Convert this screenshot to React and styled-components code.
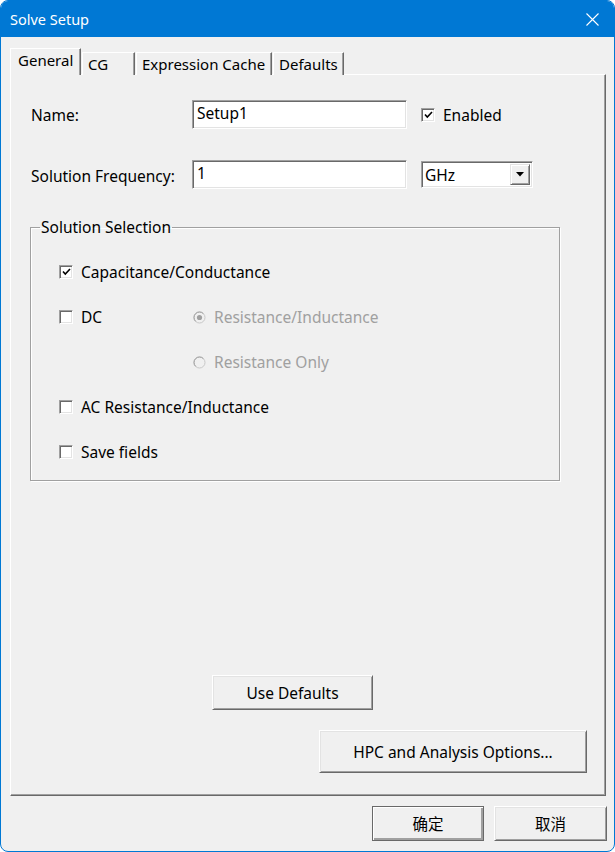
import React from 'react';
import styled, { createGlobalStyle } from 'styled-components';

const Global = createGlobalStyle`
  html, body { margin: 0; padding: 0; background: #ffffff; }
  * { box-sizing: border-box; }
`;

const FONT = `"Noto Sans", "Noto Sans CJK SC", sans-serif`;

const Window = styled.div`
  width: 615px;
  height: 852px;
  border: 1px solid #0078d4;
  border-radius: 8px;
  overflow: hidden;
  background: #f0f0f0;
  display: flex;
  flex-direction: column;
  font-family: ${FONT};
  font-size: 15.5px;
  color: #000;
`;

const TitleBar = styled.div`
  height: 36px;
  flex: none;
  background: #0078d4;
  color: #fff;
  display: flex;
  align-items: center;
  justify-content: space-between;
  padding-left: 9px;
`;

const Title = styled.span`
  font-size: 14.5px;
`;

const CloseBtn = styled.div`
  width: 44px;
  height: 36px;
  display: flex;
  align-items: center;
  justify-content: center;
`;

const Body = styled.div`
  flex: 1;
  display: flex;
  flex-direction: column;
  padding: 11px 7px 0 9px;
  min-height: 0;
`;

const TabStrip = styled.div`
  display: flex;
  align-items: flex-end;
  height: 27px;
  gap: 1px;
  position: relative;
  z-index: 1;
  margin-bottom: -1px;
`;

const Tab = styled.div`
  width: ${p => p.$w}px;
  height: ${p => (p.$active ? 27 : 23)}px;
  padding-left: ${p => (p.$active ? 7 : 5)}px;
  display: flex;
  align-items: ${p => (p.$active ? 'flex-start' : 'center')};
  padding-top: ${p => (p.$active ? 1 : 0)}px;
  font-size: 15px;
  background: #f0f0f0;
  border-top: 1px solid #ffffff;
  border-left: 1px solid #ffffff;
  border-right: 1px solid #696969;
  box-shadow: inset -1px 0 0 #a0a0a0;
  white-space: nowrap;
`;

const Panel = styled.div`
  flex: 1;
  display: flex;
  flex-direction: column;
  margin-right: 1px;
  border-top: 1px solid #ffffff;
  border-left: 1px solid #ffffff;
  border-right: 1px solid #696969;
  border-bottom: 1px solid #696969;
  box-shadow: inset -1px -1px 0 #a0a0a0;
  padding: 25px 18px 22px 19px;
`;

const FormGrid = styled.div`
  display: grid;
  grid-template-columns: 147px 215px auto;
  grid-auto-rows: 29px;
  column-gap: 14px;
  row-gap: 31px;
  align-items: center;
  padding-left: 1px;
`;

const Label = styled.span`
  white-space: nowrap;
  padding-top: ${p => p.$pt || 0}px;
`;

const TextInput = styled.input`
  width: 215px;
  height: 29px;
  font: inherit;
  color: #000;
  background: #fff;
  padding: 0 4px 3px;
  border-top: 1px solid #a0a0a0;
  border-left: 1px solid #a0a0a0;
  border-right: 1px solid #ffffff;
  border-bottom: 1px solid #ffffff;
  box-shadow: inset 1px 1px 0 #696969, inset -1px -1px 0 #e3e3e3;
  outline: none;
`;

const Combo = styled.div`
  width: 112px;
  height: 27px;
  display: flex;
  align-items: center;
  justify-content: space-between;
  background: #fff;
  padding: 2px 2px 2px 3px;
  border-top: 1px solid #a0a0a0;
  border-left: 1px solid #a0a0a0;
  border-right: 1px solid #ffffff;
  border-bottom: 1px solid #ffffff;
  box-shadow: inset 1px 1px 0 #696969, inset -1px -1px 0 #e3e3e3;
`;

const DropBtn = styled.div`
  width: 20px;
  height: 21px;
  background: #f0f0f0;
  display: flex;
  align-items: center;
  justify-content: center;
  border-top: 1px solid #e3e3e3;
  border-left: 1px solid #e3e3e3;
  border-right: 1px solid #696969;
  border-bottom: 1px solid #696969;
  box-shadow: inset 1px 1px 0 #fff, inset -1px -1px 0 #a0a0a0;
`;

const CheckItem = styled.label`
  display: flex;
  align-items: center;
  gap: ${p => p.$gap || 8}px;
  color: ${p => (p.$disabled ? '#a0a0a0' : '#000')};
  white-space: nowrap;
  grid-column: ${p => p.$col || 'auto'};
`;

const Box = styled.span`
  width: 14px;
  height: 14px;
  flex: none;
  background: #fff;
  display: flex;
  align-items: center;
  justify-content: center;
  border-top: 1px solid #a0a0a0;
  border-left: 1px solid #a0a0a0;
  border-right: 1px solid #ffffff;
  border-bottom: 1px solid #ffffff;
  box-shadow: inset 1px 1px 0 #696969, inset -1px -1px 0 #e3e3e3;
`;

const Group = styled.fieldset`
  margin: 28px 0 0 0;
  width: 530px;
  padding: 0;
  border: 1px solid #a0a0a0;
  box-shadow: 1px 1px 0 #fff, inset 1px 1px 0 #fff;
`;

const Legend = styled.legend`
  margin-left: 9px;
  padding: 0 1px;
  line-height: 20px;
`;

const GroupGrid = styled.div`
  display: grid;
  grid-template-columns: 134px auto;
  grid-auto-rows: 20px;
  row-gap: 25px;
  align-items: center;
  padding: 25px 0 18px 28px;
`;

const Spacer = styled.div`
  flex: 1;
`;

const ButtonRow = styled.div`
  display: flex;
  justify-content: ${p => p.$justify};
  padding-left: ${p => p.$indent || 0}px;
  margin-top: ${p => p.$mt || 0}px;
`;

const Button = styled.div`
  width: ${p => p.$w}px;
  height: ${p => p.$h}px;
  display: flex;
  align-items: center;
  justify-content: center;
  background: #f0f0f0;
  white-space: nowrap;
  border-top: 1px solid ${p => (p.$default ? '#696969' : '#ffffff')};
  border-left: 1px solid ${p => (p.$default ? '#696969' : '#ffffff')};
  border-right: 1px solid #696969;
  border-bottom: 1px solid #696969;
  box-shadow: ${p =>
    p.$default
      ? 'inset 1px 1px 0 #fff, inset -2px -2px 0 #a0a0a0'
      : 'inset 1px 1px 0 #e3e3e3, inset -1px -1px 0 #a0a0a0'};
`;

const Footer = styled.div`
  flex: none;
  display: flex;
  justify-content: flex-end;
  gap: 10px;
  padding: 10px 0 10px 0;
`;

const CheckMark = () => (
  <svg width="9" height="8" viewBox="0 0 9 8">
    <path d="M1 3.5 L3.3 6 L8 1" fill="none" stroke="#000" strokeWidth="1.6" />
  </svg>
);

const Radio = ({ checked }) => (
  <svg width="13" height="13" viewBox="0 0 13 13" style={{ flex: 'none' }}>
    <circle cx="6.5" cy="6.5" r="5.5" fill="#f0f0f0" stroke="#c8c8c8" strokeWidth="1" />
    <path d="M2.6 10.4 A5.5 5.5 0 0 1 10.4 2.6" fill="none" stroke="#a0a0a0" strokeWidth="1" />
    {checked && <circle cx="6.5" cy="6.5" r="2.6" fill="#a0a0a0" />}
  </svg>
);

const Check = ({ checked, children, col }) => (
  <CheckItem $col={col} $gap={8}>
    <Box>{checked && <CheckMark />}</Box>
    <span>{children}</span>
  </CheckItem>
);

export default function App() {
  return (
    <>
      <Global />
      <Window>
        <TitleBar>
          <Title>Solve Setup</Title>
          <CloseBtn>
            <svg width="13" height="13" viewBox="0 0 13 13">
              <path d="M0.5 0.5 L12.5 12.5 M12.5 0.5 L0.5 12.5" stroke="#fff" strokeWidth="1.1" />
            </svg>
          </CloseBtn>
        </TitleBar>
        <Body>
          <TabStrip>
            <Tab $active $w={71}>General</Tab>
            <Tab $w={53}>CG</Tab>
            <Tab $w={136}>Expression Cache</Tab>
            <Tab $w={71}>Defaults</Tab>
          </TabStrip>
          <Panel>
            <FormGrid>
              <Label>Name:</Label>
              <TextInput readOnly defaultValue="Setup1" />
              <Check checked>Enabled</Check>
              <Label $pt={3}>Solution Frequency:</Label>
              <TextInput readOnly defaultValue="1" />
              <Combo>
                <span>GHz</span>
                <DropBtn>
                  <svg width="8" height="5" viewBox="0 0 8 5">
                    <path d="M0 0 H8 L4 4.5 Z" fill="#000" />
                  </svg>
                </DropBtn>
              </Combo>
            </FormGrid>
            <Group>
              <Legend>Solution Selection</Legend>
              <GroupGrid>
                <Check checked col="1 / span 2">Capacitance/Conductance</Check>
                <Check>DC</Check>
                <CheckItem $disabled>
                  <Radio checked />
                  <span>Resistance/Inductance</span>
                </CheckItem>
                <span />
                <CheckItem $disabled>
                  <Radio />
                  <span>Resistance Only</span>
                </CheckItem>
                <Check col="1 / span 2">AC Resistance/Inductance</Check>
                <Check col="1 / span 2">Save fields</Check>
              </GroupGrid>
            </Group>
            <Spacer />
            <ButtonRow $justify="flex-start" $indent={182}>
              <Button $w={161} $h={35}>Use Defaults</Button>
            </ButtonRow>
            <ButtonRow $justify="flex-end" $mt={20}>
              <Button $w={268} $h={43}>HPC and Analysis Options...</Button>
            </ButtonRow>
          </Panel>
          <Footer>
            <Button $default $w={112} $h={35}>确定</Button>
            <Button $w={113} $h={35}>取消</Button>
          </Footer>
        </Body>
      </Window>
    </>
  );
}
